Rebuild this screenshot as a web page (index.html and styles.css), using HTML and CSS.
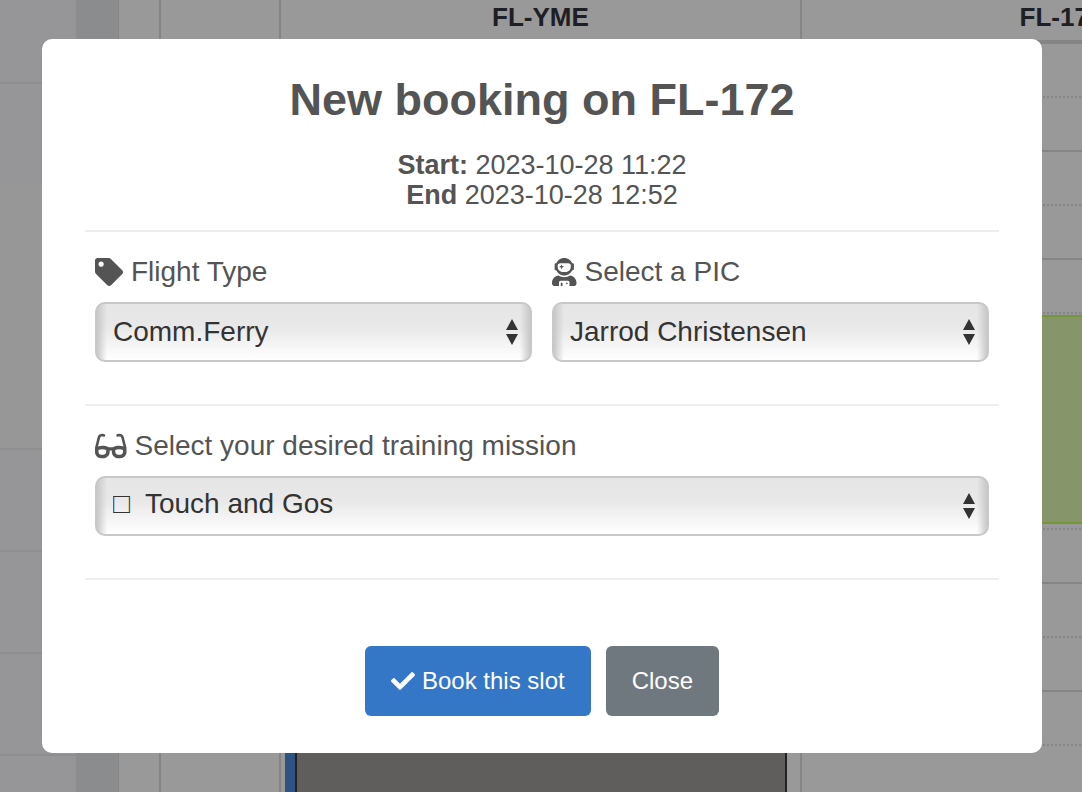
FILE: index.html
```html
<!DOCTYPE html>
<html lang="en">
<head>
<meta charset="utf-8">
<title>New booking</title>
<link rel="stylesheet" href="styles.css">
</head>
<body>
<div class="calendar">
  <div class="agenda">
    <div class="agenda-row agenda-row-first"></div>
    <div class="agenda-row agenda-row-short"></div>
    <div class="agenda-row agenda-row-tall"></div>
    <div class="agenda-row"></div>
    <div class="agenda-row"></div>
    <div class="agenda-row"></div>
    <div class="agenda-row"></div>
  </div>
  <div class="gutter"></div>
  <div class="lane lane-edge"></div>
  <div class="lane lane-time"></div>
  <section class="lane aircraft">
    <h2 class="aircraft-name">FL-YME</h2>
    <div class="slots">
      <div class="event event-busy"></div>
    </div>
  </section>
  <section class="lane aircraft">
    <h2 class="aircraft-name">FL-172</h2>
    <div class="slots slots-ruled">
      <div class="slot"></div><div class="slot"></div><div class="slot"></div><div class="slot"></div>
      <div class="slot"></div><div class="slot"></div><div class="slot"></div><div class="slot"></div>
      <div class="slot"></div><div class="slot"></div><div class="slot"></div><div class="slot"></div>
      <div class="slot"></div>
      <div class="event event-free"></div>
    </div>
  </section>
</div>

<div class="backdrop">
  <form class="modal" role="dialog" aria-modal="true" aria-labelledby="modal-title">
    <h1 class="title" id="modal-title">New booking on FL-172</h1>
    <p class="times"><strong>Start:</strong> 2023-10-28 11:22<br><strong>End</strong> 2023-10-28 12:52</p>
    <div class="fields">
      <div class="field">
        <label class="label" for="flight-type">
          <svg class="icon" viewBox="0 0 512 512" aria-hidden="true"><path d="M0 252.118V48C0 21.49 21.49 0 48 0h204.118a48 48 0 0 1 33.941 14.059l211.882 211.882c18.745 18.745 18.745 49.137 0 67.882L293.823 497.941c-18.745 18.745-49.137 18.745-67.882 0L14.059 286.059A48 48 0 0 1 0 252.118zM112 64c-26.51 0-48 21.49-48 48s21.49 48 48 48 48-21.49 48-48-21.49-48-48-48z"/></svg>
          <span>Flight Type</span>
        </label>
        <div class="picker">
          <select class="select" id="flight-type"><option>Comm.Ferry</option></select>
          <svg class="arrows" viewBox="0 0 12 26" aria-hidden="true"><path d="M6 0l6 11H0zM6 26l6-11H0z"/></svg>
        </div>
      </div>
      <div class="field">
        <label class="label" for="pic">
          <svg class="icon" viewBox="0 0 448 512" aria-hidden="true"><path d="M64 224h13.5c24.7 56.5 80.9 96 146.5 96s121.8-39.5 146.5-96H384c8.8 0 16-7.2 16-16v-96c0-8.8-7.2-16-16-16h-13.5C345.8 39.5 289.6 0 224 0S102.2 39.5 77.5 96H64c-8.8 0-16 7.2-16 16v96c0 8.8 7.2 16 16 16zm40-88c0-22.1 21.5-40 48-40h144c26.5 0 48 17.9 48 40v24c0 53-43 96-96 96h-48c-53 0-96-43-96-96v-24zm72 72l12-36 36-12-36-12-12-36-12 36-36 12 36 12 12 36zm151.6 113.4C297.7 340.7 262.2 352 224 352s-73.7-11.3-103.6-30.6C52.9 328.5 0 385 0 454.4v9.6c0 26.5 21.5 48 48 48h80v-64c0-17.7 14.3-32 32-32h128c17.7 0 32 14.3 32 32v64h80c26.5 0 48-21.5 48-48v-9.6c0-69.4-52.9-125.9-120.4-133zM272 448c-8.8 0-16 7.2-16 16s7.2 16 16 16 16-7.2 16-16-7.2-16-16-16zm-96 0c-8.8 0-16 7.2-16 16v48h32v-48c0-8.8-7.2-16-16-16z"/></svg>
          <span>Select a PIC</span>
        </label>
        <div class="picker">
          <select class="select" id="pic"><option>Jarrod Christensen</option></select>
          <svg class="arrows" viewBox="0 0 12 26" aria-hidden="true"><path d="M6 0l6 11H0zM6 26l6-11H0z"/></svg>
        </div>
      </div>
    </div>
    <div class="fields">
      <div class="field">
        <label class="label" for="mission">
          <svg class="icon" viewBox="0 0 576 512" aria-hidden="true"><path d="M574.1 280.37L528.75 98.66c-5.91-23.7-21.59-44.05-43-55.81-21.44-11.73-46.97-14.11-70.19-6.33l-15.25 5.08c-8.39 2.79-12.92 11.86-10.12 20.24l5.06 15.18c2.79 8.38 11.85 12.91 20.23 10.12l13.18-4.39c10.87-3.62 23-3.57 33.16 1.73 10.29 5.37 17.57 14.56 20.37 25.82l38.46 153.82c-22.19-6.81-49.79-12.46-81.2-12.46-34.77 0-73.98 7.02-114.85 26.74h-73.18c-40.87-19.74-80.08-26.75-114.86-26.75-31.42 0-59.02 5.65-81.21 12.46l38.46-153.83c2.79-11.25 10.09-20.45 20.38-25.81 10.16-5.3 22.28-5.35 33.15-1.73l13.17 4.39c8.38 2.79 17.44-1.74 20.23-10.12l5.06-15.18c2.8-8.38-1.73-17.45-10.12-20.24l-15.25-5.08c-23.22-7.78-48.75-5.41-70.19 6.33-21.41 11.77-37.09 32.11-43 55.8L1.9 280.37A64.218 64.218 0 0 0 0 295.86v70.25C0 429.01 51.58 480 115.2 480h37.12c60.28 0 110.37-45.94 114.88-105.37l2.93-38.63h35.75l2.93 38.63C313.31 434.06 363.4 480 423.68 480h37.12c63.62 0 115.2-50.99 115.2-113.88v-70.25c0-5.23-.64-10.43-1.9-15.5zm-370.72 89.42c-1.97 25.91-24.4 46.21-51.06 46.21H115.2C86.97 416 64 393.62 64 366.11v-37.54c18.12-6.48 43.42-12.92 72.58-12.92 23.86 0 47.26 4.33 69.93 12.92l-3.13 41.22zM512 366.12c0 27.51-22.97 49.88-51.2 49.88h-37.12c-26.67 0-49.1-20.3-51.06-46.21l-3.13-41.22c22.67-8.59 46.08-12.92 69.95-12.92 29.12 0 54.43 6.44 72.55 12.93v37.54z"/></svg>
          <span>Select your desired training mission</span>
        </label>
        <div class="picker">
          <select class="select select-mission" id="mission"><option>□&nbsp; Touch and Gos</option></select>
          <svg class="arrows" viewBox="0 0 12 26" aria-hidden="true"><path d="M6 0l6 11H0zM6 26l6-11H0z"/></svg>
        </div>
      </div>
    </div>
    <div class="actions">
      <button class="button button-primary" type="submit">
        <svg class="icon icon-check" viewBox="0 0 512 512" aria-hidden="true"><path d="M173.898 439.404l-166.4-166.4c-9.997-9.997-9.997-26.206 0-36.204l36.203-36.204c9.997-9.998 26.207-9.998 36.204 0L192 312.69 432.095 72.596c9.997-9.997 26.207-9.997 36.204 0l36.203 36.204c9.997 9.997 9.997 26.206 0 36.204l-294.4 294.401c-9.998 9.997-26.207 9.997-36.204-.001z"/></svg>
        <span>Book this slot</span>
      </button>
      <button class="button" type="button">Close</button>
    </div>
  </form>
</div>
</body>
</html>
```

FILE: styles.css
```css
*,
*::before {
  box-sizing: border-box;
}

body {
  margin: 0;
  height: 100vh;
  overflow: hidden;
  background: #fff;
  color: #545454;
  font-family: "Liberation Sans", Arial, Helvetica, sans-serif;
}

/* Calendar behind the dialog */
.calendar {
  display: flex;
  height: 100vh;
  overflow: hidden;
}

.agenda {
  flex: 0 0 76px;
  overflow: hidden;
}

.agenda-row {
  height: 102px;
  border-bottom: 2px solid #ededed;
  background: #fafafd;
}

.agenda-row-first {
  height: 84px;
}

.agenda-row-short {
  height: 99px;
  border-bottom: 0;
}

.agenda-row-tall {
  height: 267px;
  background: #fcfcfc;
}

.gutter {
  flex: 0 0 43px;
  background: #e8e9ed;
  border-right: 1px solid #dedede;
}

.lane {
  flex: none;
  border-right: 2px solid #dedede;
}

.lane-edge {
  width: 42px;
}

.lane-time {
  width: 120px;
}

.aircraft {
  width: 521px;
}

.aircraft-name {
  margin: 0;
  height: 44px;
  padding-top: 2px;
  border-bottom: 4px solid #dedede;
  color: #33343c;
  font-size: 26px;
  line-height: 30px;
  text-align: center;
}

.slots {
  position: relative;
  height: 100%;
}

.slot {
  height: 54px;
  border-bottom: 2px dotted #dedede;
}

.slot:nth-child(even) {
  border-bottom-style: solid;
}

.event {
  position: absolute;
}

.event-free {
  top: 271px;
  left: 4px;
  right: 12px;
  height: 209px;
  background: #dff8b1;
  border: 2px solid #c4fa5d;
}

.event-busy {
  top: 600px;
  left: 4px;
  right: 13px;
  height: 300px;
  background: #9e9d99;
  border: 2px solid #3a3a3a;
  border-left: 0;
}

.event-busy::before {
  content: "";
  display: block;
  width: 12px;
  height: 100%;
  background: #4e89d7;
  border-right: 2px solid #3a3a3a;
}

/* Booking dialog */
.backdrop {
  position: fixed;
  inset: 0;
  display: flex;
  align-items: center;
  justify-content: center;
  padding: 0 40px 0 42px;
  background: rgba(0, 0, 0, 0.4);
}

.modal {
  width: 100%;
  max-width: 1000px;
  padding: 34px 43px 37px;
  border-radius: 10px;
  background: #fff;
}

.title {
  margin: 0 0 23px;
  font-size: 45px;
  line-height: 54px;
  text-align: center;
}

.times {
  margin: 0 0 20px;
  font-size: 27px;
  line-height: 30px;
  text-align: center;
}

.fields {
  display: flex;
  gap: 20px;
  padding: 24px 10px 42px;
  border-top: 2px solid #eee;
}

.field {
  flex: 1;
  min-width: 0;
}

.label {
  display: flex;
  align-items: center;
  gap: 8px;
  margin-bottom: 14px;
  font-size: 28px;
  line-height: 32px;
}

.icon {
  height: 28px;
  fill: currentColor;
}

.picker {
  position: relative;
}

.select {
  display: block;
  width: 100%;
  height: 60px;
  padding: 0 40px 2px 16px;
  border: 2px solid #c8c8c8;
  border-radius: 10px;
  appearance: none;
  background:
    linear-gradient(to right, #c8c8c8, rgba(200, 200, 200, 0) 10px calc(100% - 10px), #c8c8c8),
    linear-gradient(#e6e6e6, #e8e8e8 40%, #fff);
  color: #333;
  font-family: inherit;
  font-size: 28px;
}

.select-mission {
  padding-bottom: 6px;
}

.arrows {
  position: absolute;
  top: 17px;
  right: 14px;
  height: 26px;
  fill: #333;
  pointer-events: none;
}

.actions {
  display: flex;
  justify-content: center;
  gap: 15px;
  padding-top: 66px;
  border-top: 2px solid #eee;
}

.button {
  display: flex;
  align-items: center;
  gap: 7px;
  height: 70px;
  padding: 0 26px;
  border: 0;
  border-radius: 6px;
  background: #70787f;
  color: #fff;
  font-family: inherit;
  font-size: 24px;
}

.button-primary {
  background: #3477c7;
}

.icon-check {
  height: 24px;
}
```
